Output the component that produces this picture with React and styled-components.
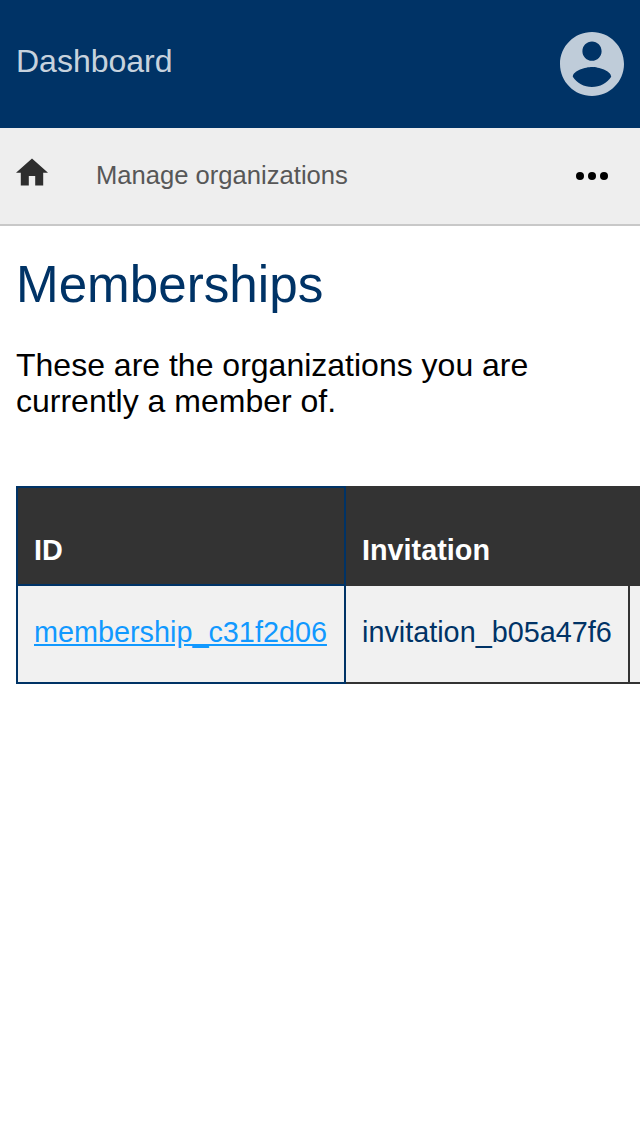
import React from 'react';
import styled, { createGlobalStyle } from 'styled-components';

const GlobalStyle = createGlobalStyle`
  * { box-sizing: border-box; }
  body {
    margin: 0;
    background: #fff;
    color: #000;
    font-family: "Liberation Sans", Arial, sans-serif;
    font-size: 32px;
  }
`;

const Page = styled.div`
  min-height: 100vh;
  overflow: hidden;
`;

const Header = styled.header`
  display: flex;
  align-items: center;
  justify-content: space-between;
  height: 128px;
  padding: 0 16px;
  background: #003366;
`;

const Brand = styled.span`
  color: rgba(255, 255, 255, 0.8);
  line-height: 36px;
  padding-bottom: 6px;
`;

const IconButton = styled.button`
  display: flex;
  padding: 0;
  border: 0;
  background: none;
  color: ${({ $color }) => $color};
`;

const NavBar = styled.nav`
  display: flex;
  align-items: center;
  height: 98px;
  padding: 0 24px 0 16px;
  background: #eee;
  border-bottom: 2px solid #c8c8c8;
`;

const HomeLink = styled.a`
  display: flex;
  margin-right: 48px;
  padding-bottom: 8px;
  color: #2e2e2e;
`;

const Crumb = styled.span`
  flex: 1;
  color: #575757;
  font-size: 25.6px;
  line-height: 30px;
  padding-bottom: 2px;
`;

const Content = styled.main`
  padding: 29px 16px;
`;

const Title = styled.h1`
  margin: 0 0 32px;
  color: #003366;
  font-size: 51.2px;
  font-weight: 400;
  line-height: 60px;
`;

const Lead = styled.p`
  margin: 0 0 67px;
  line-height: 36px;
`;

const Table = styled.table`
  width: 900px;
  table-layout: fixed;
  border-collapse: collapse;
  color: #003366;
  font-size: 28.8px;
  line-height: 34px;
`;

const Column = styled.col`
  width: ${({ $width }) => $width}px;
`;

const HeadCell = styled.th`
  height: 98px;
  padding: 0 16px 17px;
  border: 2px solid ${({ $primary }) => ($primary ? '#003366' : '#333')};
  background: #333;
  color: #fff;
  text-align: left;
  vertical-align: bottom;
`;

const Cell = styled.td`
  height: 98px;
  padding: 0 16px 4px;
  border: 2px solid ${({ $primary }) => ($primary ? '#003366' : '#333')};
  background: #f1f1f1;
  vertical-align: middle;
`;

const RecordLink = styled.a`
  color: #1199ff;
  text-decoration: underline;
`;

const AccountIcon = () => (
  <svg width="64" height="64" viewBox="2 2 20 20" fill="currentColor">
    <path d="M12 2C6.48 2 2 6.48 2 12s4.48 10 10 10 10-4.48 10-10S17.52 2 12 2zm0 3c1.66 0 3 1.34 3 3s-1.34 3-3 3-3-1.34-3-3 1.34-3 3-3zm0 14.2c-2.5 0-4.71-1.28-6-3.22.03-1.99 4-3.08 6-3.08 1.99 0 5.97 1.09 6 3.08-1.29 1.94-3.5 3.22-6 3.22z" />
  </svg>
);

const HomeIcon = () => (
  <svg width="32" height="28" viewBox="2 2.75 20 17.5" fill="currentColor">
    <path d="M10 20v-6h4v6h5v-8h3L12 3 2 12h3v8z" />
  </svg>
);

const MoreIcon = () => (
  <svg width="48" height="48" viewBox="0 0 24 24" fill="currentColor">
    <circle cx="6" cy="12" r="2" />
    <circle cx="12" cy="12" r="2" />
    <circle cx="18" cy="12" r="2" />
  </svg>
);

export default function App() {
  return (
    <Page>
      <GlobalStyle />
      <Header>
        <Brand>Dashboard</Brand>
        <IconButton $color="#bfccd9">
          <AccountIcon />
        </IconButton>
      </Header>
      <NavBar>
        <HomeLink href="#">
          <HomeIcon />
        </HomeLink>
        <Crumb>Manage organizations</Crumb>
        <IconButton $color="#000">
          <MoreIcon />
        </IconButton>
      </NavBar>
      <Content>
        <Title>Memberships</Title>
        <Lead>These are the organizations you are currently a member of.</Lead>
        <Table>
          <colgroup>
            <Column $width={328} />
            <Column $width={284} />
            <col />
          </colgroup>
          <thead>
            <tr>
              <HeadCell $primary>ID</HeadCell>
              <HeadCell>Invitation</HeadCell>
              <HeadCell />
            </tr>
          </thead>
          <tbody>
            <tr>
              <Cell $primary>
                <RecordLink href="#">membership_c31f2d06</RecordLink>
              </Cell>
              <Cell>invitation_b05a47f6</Cell>
              <Cell />
            </tr>
          </tbody>
        </Table>
      </Content>
    </Page>
  );
}
